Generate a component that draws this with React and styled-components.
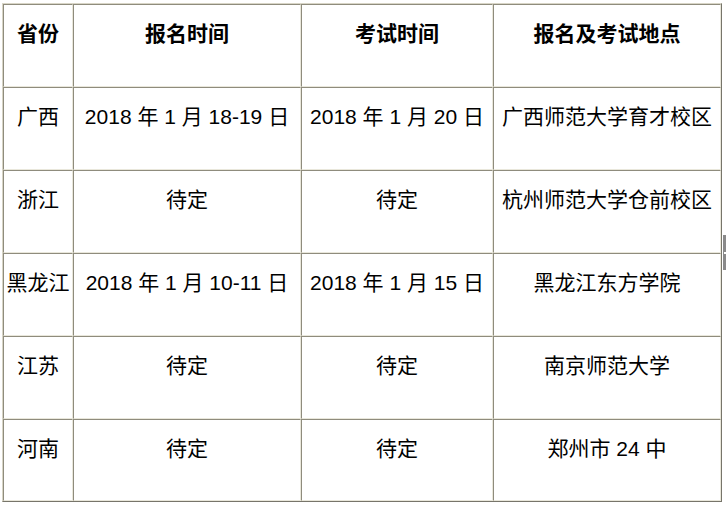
import React from "react";
import styled, { createGlobalStyle } from "styled-components";

const Global = createGlobalStyle`
  html, body { margin: 0; padding: 0; background: #ffffff; }
  body { font-family: "Liberation Sans", "Noto Sans CJK SC", sans-serif; color: #000; }
`;

const Page = styled.div`
  position: relative;
  width: 726px;
  height: 505px;
  overflow: hidden;
  padding: 3px 0 0 2px;
  box-sizing: border-box;
`;

const Table = styled.table`
  border-collapse: separate;
  border-spacing: 0;
  table-layout: fixed;
  width: 720px;
  border-style: solid;
  border-width: 1px;
  border-color: #d8d5c6 #77756a #77756a #d8d5c6;
`;

const Cell = styled.td`
  box-sizing: border-box;
  height: ${(p) => p.$h || 83}px;
  padding: 14px 0 0 0;
  vertical-align: top;
  text-align: center;
  white-space: nowrap;
  font-size: 21px;
  line-height: 29px;
  font-weight: ${(p) => (p.$head ? 700 : 400)};
  border-style: solid;
  border-width: 1px;
  border-color: #8f8c7d #e9e7db #e9e7db #8f8c7d;
`;

const Handle = styled.div`
  position: absolute;
  left: 723px;
  top: 235px;
  width: 3px;
  height: 35px;
  background: #8a8a8a;
  &::after {
    content: "";
    position: absolute;
    left: 1px;
    top: 17px;
    width: 2px;
    height: 2px;
    background: #fff;
  }
`;

const widths = [70, 228, 192, 228];
const head = ["省份", "报名时间", "考试时间", "报名及考试地点"];
const rows = [
  ["广西", "2018 年 1 月 18-19 日", "2018 年 1 月 20 日", "广西师范大学育才校区"],
  ["浙江", "待定", "待定", "杭州师范大学仓前校区"],
  ["黑龙江", "2018 年 1 月 10-11 日", "2018 年 1 月 15 日", "黑龙江东方学院"],
  ["江苏", "待定", "待定", "南京师范大学"],
  ["河南", "待定", "待定", "郑州市 24 中"],
];

export default function App() {
  return (
    <>
      <Global />
      <Page>
        <Table>
          <colgroup>
            {widths.map((w, i) => (
              <col key={i} style={{ width: w }} />
            ))}
          </colgroup>
          <thead>
            <tr>
              {head.map((h) => (
                <Cell as="th" key={h} $head>
                  {h}
                </Cell>
              ))}
            </tr>
          </thead>
          <tbody>
            {rows.map((r, i) => (
              <tr key={i}>
                {r.map((c, j) => (
                  <Cell key={j} $h={i === rows.length - 1 ? 82 : 83}>
                    {c}
                  </Cell>
                ))}
              </tr>
            ))}
          </tbody>
        </Table>
        <Handle />
      </Page>
    </>
  );
}
